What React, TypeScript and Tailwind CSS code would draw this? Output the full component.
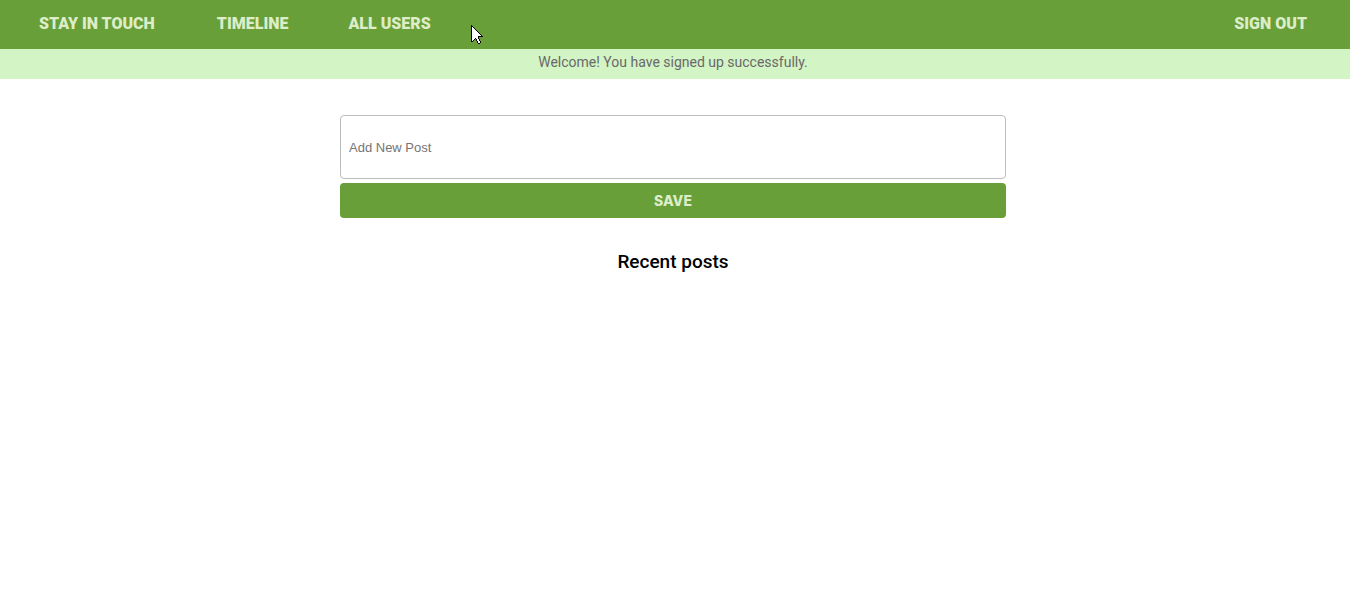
const links = [
  { label: 'STAY IN TOUCH', href: '#home', spacing: 'mr-[62px]' },
  { label: 'TIMELINE', href: '#timeline', spacing: 'mr-[60px]' },
  { label: 'ALL USERS', href: '#users', spacing: '' },
];

function Cursor() {
  return (
    <svg
      className="pointer-events-none absolute top-[25px] left-[471px]"
      width="12"
      height="19"
      viewBox="0 0 12 19"
      shapeRendering="crispEdges"
      aria-hidden="true"
    >
      <path
        d="M0 0H1V1H2V2H3V3H4V4H5V5H6V6H7V7H8V8H9V9H10V10H11V11H12V12H8V14H9V16H10V18H9V19H7V18H6V16H5V14H4V15H3V16H2V17H0Z"
        fill="#000"
      />
      <path
        d="M1 2H2V3H3V4H4V5H5V6H6V7H7V8H8V9H9V10H10V11H7V14H8V16H9V18H7V16H6V14H5V13H4V14H3V15H2V16H1Z"
        fill="#fff"
      />
    </svg>
  );
}

export default function App() {
  return (
    <div className="relative font-['Roboto',sans-serif]">
      <nav className="flex h-[49px] items-start bg-[#689f38] pt-3 pr-[43px] pl-[39px] text-base leading-6 font-black text-[#dcedc8]">
        {links.map((link) => (
          <a key={link.label} href={link.href} className={link.spacing}>
            {link.label}
          </a>
        ))}
        <a href="#sign-out" className="ml-auto">
          SIGN OUT
        </a>
      </nav>
      <p
        role="status"
        className="h-[30px] bg-[#d3f4c5] pt-[3px] pr-1 text-center text-sm leading-5 text-[#696969]"
      >
        Welcome! You have signed up successfully.
      </p>
      <main className="flex flex-col items-center pt-9 pr-1">
        <form
          className="flex w-full max-w-[666px] flex-col gap-1"
          onSubmit={(event) => event.preventDefault()}
        >
          <input
            type="text"
            aria-label="Add New Post"
            placeholder="Add New Post"
            className="h-16 rounded border border-[#bdbdbd] px-2 font-['Liberation_Sans',sans-serif] text-[13px] placeholder:text-[#757575]"
          />
          <button
            type="submit"
            className="h-[35px] rounded bg-[#689f38] font-['Inter',sans-serif] text-sm font-extrabold text-[#dcedc8]"
          >
            SAVE
          </button>
        </form>
        <h3 className="mt-[30px] text-[19px] leading-7 font-medium text-black">Recent posts</h3>
      </main>
      <Cursor />
    </div>
  );
}
